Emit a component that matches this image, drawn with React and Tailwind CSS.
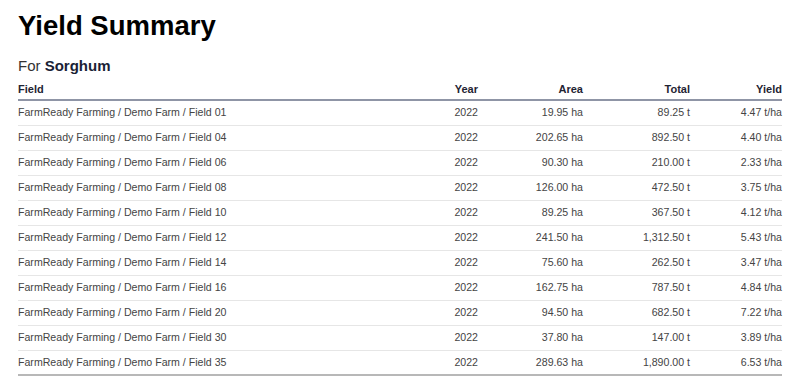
import React from "react";

const rows = [
  ["01", "19.95 ha", "89.25 t", "4.47 t/ha"],
  ["04", "202.65 ha", "892.50 t", "4.40 t/ha"],
  ["06", "90.30 ha", "210.00 t", "2.33 t/ha"],
  ["08", "126.00 ha", "472.50 t", "3.75 t/ha"],
  ["10", "89.25 ha", "367.50 t", "4.12 t/ha"],
  ["12", "241.50 ha", "1,312.50 t", "5.43 t/ha"],
  ["14", "75.60 ha", "262.50 t", "3.47 t/ha"],
  ["16", "162.75 ha", "787.50 t", "4.84 t/ha"],
  ["20", "94.50 ha", "682.50 t", "7.22 t/ha"],
  ["30", "37.80 ha", "147.00 t", "3.89 t/ha"],
  ["35", "289.63 ha", "1,890.00 t", "6.53 t/ha"],
];

export default function App() {
  return (
    <div className="bg-white w-[800px] h-[387px] px-[18px] pt-[9px] font-['Liberation_Sans',Arial,sans-serif] overflow-hidden">
      <h1 className="text-[27.5px] leading-[34px] font-bold text-black">Yield Summary</h1>
      <div className="mt-[14px] text-[15px] leading-[18px] text-[#333]">
        For <span className="font-bold text-[#1a1f36]">Sorghum</span>
      </div>
      <div className="mt-[5px] text-[10.6px]">
        <div className="grid grid-cols-[1fr_100px_105px_107px_92px] h-[21px] items-center border-b-2 border-[#8f95a6] font-bold text-[#1f2433] text-[11px]">
          <div>Field</div>
          <div className="text-right">Year</div>
          <div className="text-right">Area</div>
          <div className="text-right">Total</div>
          <div className="text-right">Yield</div>
        </div>
        {rows.map((r, i) => (
          <div
            key={r[0]}
            className={`grid grid-cols-[1fr_100px_105px_107px_92px] h-[25px] items-center text-[#444] ${i === rows.length - 1 ? "border-b-2 border-[#b8b8b8]" : "border-b border-[#e6e6e6]"}`}
          >
            <div>FarmReady Farming / Demo Farm / Field {r[0]}</div>
            <div className="text-right">2022</div>
            <div className="text-right">{r[1]}</div>
            <div className="text-right">{r[2]}</div>
            <div className="text-right">{r[3]}</div>
          </div>
        ))}
      </div>
    </div>
  );
}
